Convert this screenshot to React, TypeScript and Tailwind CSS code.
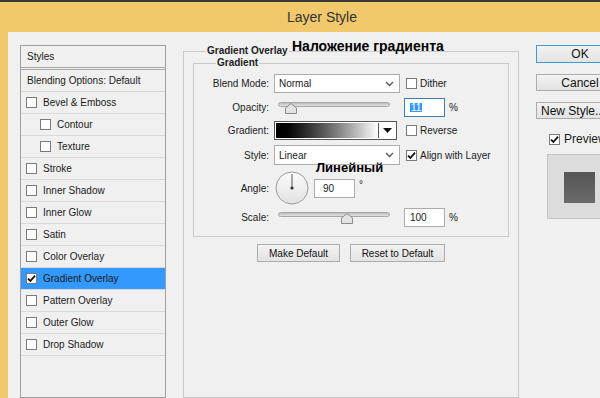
import React from 'react'

const FONT = { fontFamily: '"Liberation Sans", Arial, sans-serif' }

type StyleItem = { name: string; sub?: boolean; checked?: boolean; active?: boolean }

const STYLE_ITEMS: StyleItem[] = [
  { name: 'Bevel & Emboss' },
  { name: 'Contour', sub: true },
  { name: 'Texture', sub: true },
  { name: 'Stroke' },
  { name: 'Inner Shadow' },
  { name: 'Inner Glow' },
  { name: 'Satin' },
  { name: 'Color Overlay' },
  { name: 'Gradient Overlay', checked: true, active: true },
  { name: 'Pattern Overlay' },
  { name: 'Outer Glow' },
  { name: 'Drop Shadow' },
]

function Check({ checked }: { checked?: boolean }) {
  return (
    <span className="flex h-[11px] w-[11px] shrink-0 items-center justify-center border border-[#7a7a7a] bg-white">
      {checked && (
        <svg width="9" height="9" viewBox="0 0 9 9">
          <path d="M1 4.6 L3.4 7 L8 1.6" fill="none" stroke="#111" strokeWidth="1.8" />
        </svg>
      )}
    </span>
  )
}

function Chevron() {
  return (
    <svg width="9" height="6" viewBox="0 0 9 6" className="shrink-0">
      <path d="M1 1 L4.5 4.5 L8 1" fill="none" stroke="#555" strokeWidth="1.3" />
    </svg>
  )
}

function Select({ value }: { value: string }) {
  return (
    <div className="flex h-full w-[126px] items-center justify-between border border-[#acacac] bg-white pl-[4px] pr-[5px]">
      <span>{value}</span>
      <Chevron />
    </div>
  )
}

function Slider({ pos }: { pos: number }) {
  return (
    <div className="relative ml-[8px] h-[12px] w-[112px]">
      <div className="mt-[1px] h-[5px] w-full rounded-full border border-[#a8a8a8] bg-gradient-to-b from-[#bdbdbd] to-[#e2e2e2]" />
      <svg width="12" height="11" viewBox="0 0 12 11" className="absolute top-[1px]" style={{ left: pos }}>
        <path d="M6 0.5 L11.5 5 L11.5 10.5 L0.5 10.5 L0.5 5 Z" fill="#e4e4e4" stroke="#8a8a8a" />
      </svg>
    </div>
  )
}

function NumBox({ value, focused }: { value: string; focused?: boolean }) {
  return (
    <div
      className={`flex h-[19px] w-[41px] items-center bg-white pl-[5px] ${
        focused ? 'border border-[#3c7fb1]' : 'border border-[#acacac]'
      }`}
    >
      {focused ? <span className="bg-[#3399ff] px-[1px] leading-[9px] text-white">11</span> : <span>{value}</span>}
    </div>
  )
}

function Label({ children }: { children: React.ReactNode }) {
  return <div className="w-[76px] shrink-0 pr-[1px] text-right text-[#222]">{children}</div>
}

function Button({ children, primary, className = '' }: { children: React.ReactNode; primary?: boolean; className?: string }) {
  return (
    <div
      className={`flex shrink-0 items-center justify-center bg-gradient-to-b from-[#f2f2f2] to-[#e3e3e3] text-[#111] ${
        primary ? 'border border-[#3c9ad6]' : 'border border-[#acacac]'
      } ${className}`}
    >
      {children}
    </div>
  )
}

function LayerStylesList() {
  return (
    <div className="flex w-[146px] shrink-0 flex-col self-stretch border border-[#a0a0a0] bg-[#f0f0f0]">
      <div className="flex h-[24px] items-center border-b-[3px] border-double border-[#a8a8a8] pl-[6px]">Styles</div>
      <div className="flex h-[22px] items-center border-b border-[#d4d4d4] pl-[6px]">Blending Options: Default</div>
      {STYLE_ITEMS.map(it => (
        <div
          key={it.name}
          className={`flex h-[22px] items-center gap-[6px] border-b border-[#dadada] ${it.sub ? 'pl-[19px]' : 'pl-[5px]'} ${
            it.active ? 'bg-[#3399ff]' : ''
          }`}
        >
          <Check checked={it.checked} />
          <span>{it.name}</span>
        </div>
      ))}
    </div>
  )
}

function GradientOverlay() {
  return (
    <fieldset className="relative w-[336px] shrink-0 self-stretch border border-[#c9c9c9] px-[9px]">
      <legend className="ml-[13px] px-[1px] text-[10px] font-bold leading-[12px] text-[#222]">Gradient Overlay</legend>
      <span className="absolute left-[108px] top-[-21px] text-[14px] font-bold text-black">Наложение градиента</span>

      <fieldset className="border border-[#c9c9c9] pb-[9px]">
        <legend className="ml-[22px] px-[1px] text-[10px] font-bold leading-[12px] text-[#222]">Gradient</legend>

        <div className="mt-[5px] flex h-[19px] items-center">
          <Label>Blend Mode:</Label>
          <div className="ml-[4px] h-full">
            <Select value="Normal" />
          </div>
          <div className="ml-[6px] flex items-center gap-[3px]">
            <Check />
            <span>Dither</span>
          </div>
        </div>

        <div className="mt-[4px] flex h-[20px] items-center">
          <Label>Opacity:</Label>
          <div className="w-[134px]">
            <Slider pos={7} />
          </div>
          <NumBox value="11" focused />
          <span className="ml-[4px]">%</span>
        </div>

        <div className="mt-[4px] flex h-[19px] items-center">
          <Label>Gradient:</Label>
          <div className="ml-[4px] flex h-full w-[123px] border border-[#555] bg-white p-[1px]">
            <div className="h-full flex-1 bg-gradient-to-r from-black to-white" />
            <div className="flex w-[17px] items-center justify-center border-l border-[#555]">
              <svg width="9" height="5" viewBox="0 0 9 5">
                <path d="M0 0 L9 0 L4.5 5 Z" fill="#111" />
              </svg>
            </div>
          </div>
          <div className="ml-[9px] flex items-center gap-[3px]">
            <Check />
            <span>Reverse</span>
          </div>
        </div>

        <div className="relative mt-[5px] flex h-[20px] items-center">
          <Label>Style:</Label>
          <div className="ml-[4px] h-full">
            <Select value="Linear" />
          </div>
          <div className="ml-[6px] flex items-center gap-[3px]">
            <Check checked />
            <span>Align with Layer</span>
          </div>
          <span className="absolute left-[122px] top-[15px] text-[13px] font-bold leading-[16px] text-black">Линейный</span>
        </div>

        <div className="mt-[6px] flex h-[34px] items-center">
          <Label>Angle:</Label>
          <svg width="34" height="34" viewBox="0 0 34 34" className="ml-[5px] shrink-0">
            <defs>
              <linearGradient id="dial" x1="0" y1="0" x2="0" y2="1">
                <stop offset="0" stopColor="#fbfbfb" />
                <stop offset="1" stopColor="#e2e2e2" />
              </linearGradient>
            </defs>
            <circle cx="17" cy="17" r="16" fill="url(#dial)" stroke="#9a9a9a" />
            <line x1="17" y1="17" x2="17" y2="3" stroke="#555" strokeWidth="1" />
            <circle cx="17" cy="17" r="1.6" fill="#333" />
          </svg>
          <div className="ml-[5px] flex h-[19px] w-[41px] items-center border border-[#acacac] bg-white pl-[8px]">90</div>
          <span className="ml-[4px] self-start pt-[6px] text-[10px]">°</span>
        </div>

        <div className="mt-[3px] flex h-[19px] items-center">
          <Label>Scale:</Label>
          <div className="w-[134px]">
            <Slider pos={63} />
          </div>
          <NumBox value="100" />
          <span className="ml-[4px]">%</span>
        </div>
      </fieldset>

      <div className="mt-[7px] flex gap-[10px] pl-[64px]">
        <Button className="h-[18px] w-[83px] text-[10px]">Make Default</Button>
        <Button className="h-[18px] w-[95px] text-[10px]">Reset to Default</Button>
      </div>
    </fieldset>
  )
}

function RightColumn() {
  return (
    <div className="flex w-[90px] shrink-0 flex-col text-[12px]">
      <Button primary className="h-[18px] w-[88px]">OK</Button>
      <Button className="mt-[11px] h-[17px] w-[88px]">Cancel</Button>
      <Button className="mt-[11px] h-[17px] w-[88px] justify-start whitespace-nowrap pl-[4px]">New Style...</Button>
      <div className="ml-[13px] mt-[11px] flex items-center gap-[4px] whitespace-nowrap">
        <Check checked />
        <span>Preview</span>
      </div>
      <div className="ml-[11px] mt-[6px] flex h-[65px] w-[64px] shrink-0 items-start border border-[#c4c4c4] bg-[#dcdcdc] pl-[16px] pt-[17px]">
        <div className="h-[31px] w-[31px] bg-gradient-to-b from-[#555] to-[#6b6b6b]" />
      </div>
    </div>
  )
}

export default function App() {
  return (
    <div className="flex h-[398px] w-[600px] flex-col overflow-hidden border-t-2 border-[#3b3a33] bg-[#f1c86b] text-[10px] text-[#1a1a1a]" style={FONT}>
      <div className="flex h-[30px] shrink-0 items-center justify-center pl-[44px] text-[14px] text-[#333]">Layer Style</div>
      <div className="ml-[8px] flex flex-1 gap-[17px] overflow-hidden bg-[#f0f0f0] pl-[12px] pt-[13px]">
        <LayerStylesList />
        <GradientOverlay />
        <RightColumn />
      </div>
    </div>
  )
}
